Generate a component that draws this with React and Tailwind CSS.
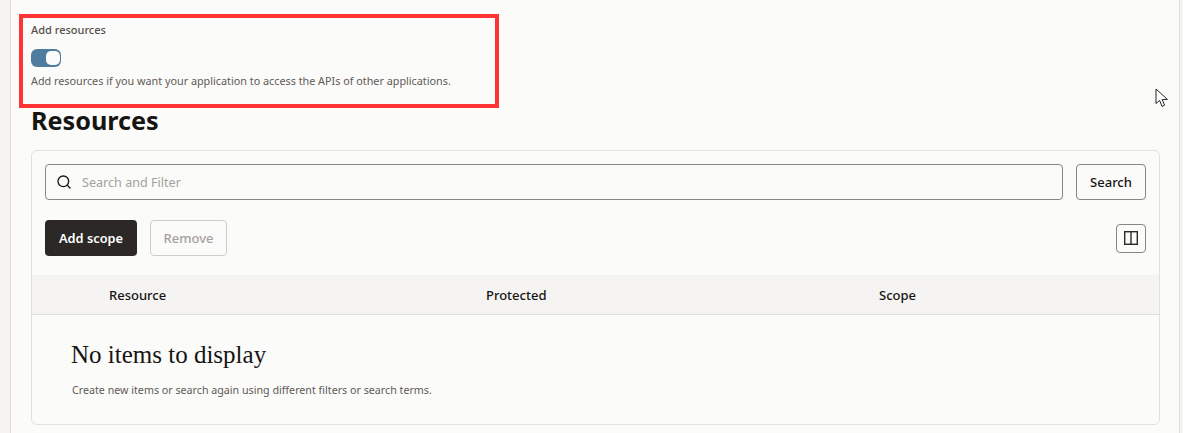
import { Search } from "lucide-react";

const sans = "font-['Noto_Sans',sans-serif]";

const Cursor = () => (
  <svg width="14" height="20" viewBox="0 0 14 20" className="absolute left-[1155px] top-[88px]">
    <path d="M1 1 L1 15.5 L4.6 12.4 L7 18.4 L9.6 17.2 L7.2 11.6 L12.4 11.4 Z" fill="#ffffff" stroke="#222222" strokeWidth="1" />
  </svg>
);

const ColumnsIcon = () => (
  <svg width="14" height="14" viewBox="0 0 14 14" fill="none" stroke="#2b2826" strokeWidth="1.4">
    <rect x="0.7" y="0.7" width="12.6" height="12.6" />
    <path d="M7 1v12" />
  </svg>
);

const App = () => {
  return (
    <div className={`${sans} relative h-[433px] w-[1183px] overflow-hidden bg-[#f5f4f2]`}>
      <div className="ml-[10px] mr-[3px] h-full border-x border-[#dfdedb] bg-[#fbfbf9] pl-[8px] pr-[19px] pt-[14px]">
        <div className="flex h-[94px] w-[480px] flex-col border-[4px] border-[#ff3535] pl-[8px] pt-[4px]">
          <label className="text-[11px] font-medium leading-[16px] text-[#56504b]">Add resources</label>
          <div className="mt-[11px] flex h-[18px] w-[30px] items-center justify-end rounded-[6px] bg-[#4f7d9f] pr-[1.5px]">
            <div className="h-[14px] w-[14px] rounded-[5px] bg-[#fbfbf9]" />
          </div>
          <p className="mt-[6px] text-[10.8px] leading-[16px] text-[#5f5a55]">
            Add resources if you want your application to access the APIs of other applications.
          </p>
        </div>

        <h1 className="ml-[12px] text-[25.2px] font-bold leading-[24px] text-[#161513]">Resources</h1>

        <div className="ml-[12px] mt-[18px] h-[275px] rounded-[6px] border border-[#e2e1de]">
          <div className="flex gap-[13px] px-[13px] pt-[13px]">
            <div className="flex h-[36px] flex-1 items-center rounded-[4px] border border-[#8a8682] pl-[10px]">
              <Search size={16} strokeWidth={2} color="#161513" />
              <span className="ml-[10px] pt-[2px] text-[12.6px] text-[#a5a19c]">Search and Filter</span>
            </div>
            <button type="button" className="h-[36px] w-[70px] rounded-[4px] border border-[#8a8682] pt-px text-[13px] font-medium text-[#161513]">
              Search
            </button>
          </div>

          <div className="flex items-center px-[13px] pt-[20px]">
            <button type="button" className="h-[36px] w-[92px] rounded-[4px] bg-[#2b2826] pt-px text-[12.8px] font-semibold text-white">
              Add scope
            </button>
            <button type="button" className="ml-[13px] h-[36px] w-[77px] rounded-[4px] border border-[#cfcdc9] pt-px text-[13px] font-medium text-[#a5a19c]">
              Remove
            </button>
            <button type="button" className="ml-auto flex h-[29px] w-[30px] items-center justify-center rounded-[4px] border border-[#8a8682]">
              <ColumnsIcon />
            </button>
          </div>

          <div className="mt-[19px] flex h-[40px] items-center border-b border-[#dfdedb] bg-[#f5f4f2] pt-[2px] text-[13px] font-medium text-[#161513]">
            <span className="ml-[77px] w-[377px]">Resource</span>
            <span className="w-[393px]">Protected</span>
            <span>Scope</span>
          </div>

          <div className="pl-[39px] pt-[24px]">
            <h2 className="font-['Liberation_Serif',serif] text-[25px] leading-[32px] text-[#161513]">No items to display</h2>
            <p className="ml-px mt-[11px] text-[10.7px] leading-[16px] text-[#5f5a55]">
              Create new items or search again using different filters or search terms.
            </p>
          </div>
        </div>
      </div>
      <Cursor />
    </div>
  );
};

export default App;
